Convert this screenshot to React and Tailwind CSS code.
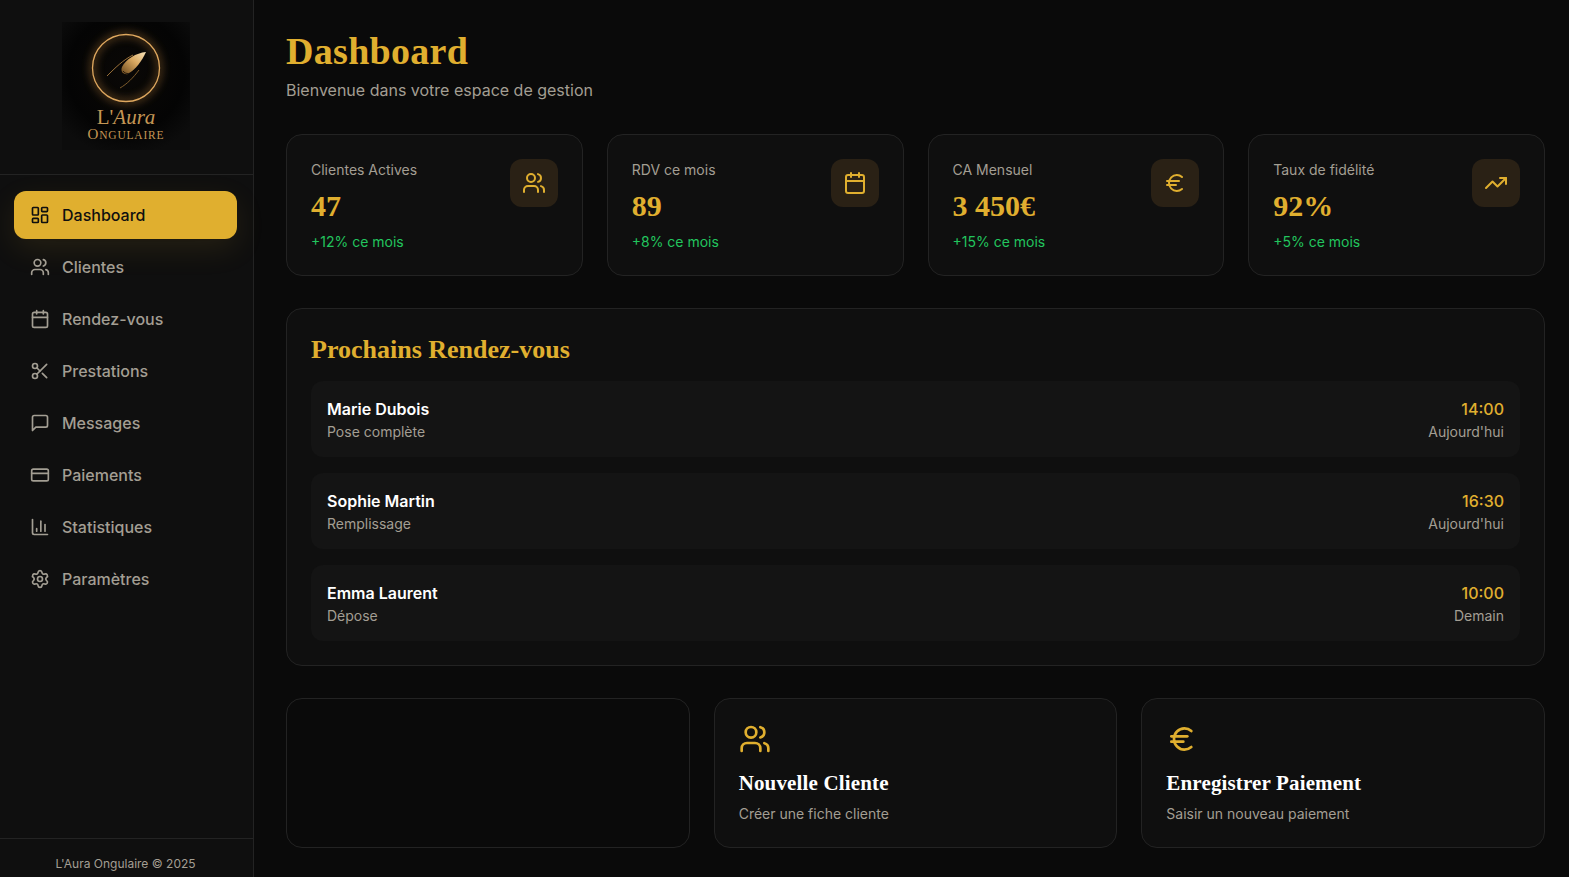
import {
    LayoutDashboard,
    Users,
    Calendar,
    Scissors,
    CreditCard,
    BarChart3,
    Settings,
    Euro,
    TrendingUp,
} from "lucide-react";

const serif = "font-['Liberation_Serif',serif] font-bold";

// lucide's current bubble is wider than the one in the picture
function MessageIcon({ size }) {
    return (
        <svg width={size} height={size} viewBox="0 0 24 24" fill="none" stroke="currentColor" strokeWidth="2" strokeLinecap="round" strokeLinejoin="round">
            <path d="M21 15a2 2 0 0 1-2 2H7l-4 4V5a2 2 0 0 1 2-2h14a2 2 0 0 1 2 2z" />
        </svg>
    );
}

const navItems = [
    { label: "Dashboard", icon: LayoutDashboard, active: true },
    { label: "Clientes", icon: Users },
    { label: "Rendez-vous", icon: Calendar },
    { label: "Prestations", icon: Scissors },
    { label: "Messages", icon: MessageIcon },
    { label: "Paiements", icon: CreditCard },
    { label: "Statistiques", icon: BarChart3 },
    { label: "Paramètres", icon: Settings },
];

const stats = [
    { label: "Clientes Actives", value: "47", delta: "+12% ce mois", icon: Users },
    { label: "RDV ce mois", value: "89", delta: "+8% ce mois", icon: Calendar },
    { label: "CA Mensuel", value: "3 450€", delta: "+15% ce mois", icon: Euro },
    { label: "Taux de fidélité", value: "92%", delta: "+5% ce mois", icon: TrendingUp },
];

const appointments = [
    { name: "Marie Dubois", service: "Pose complète", time: "14:00", day: "Aujourd'hui" },
    { name: "Sophie Martin", service: "Remplissage", time: "16:30", day: "Aujourd'hui" },
    { name: "Emma Laurent", service: "Dépose", time: "10:00", day: "Demain" },
];

function Logo() {
    return (
        <svg width="128" height="128" viewBox="0 0 128 128" className="block">
            <defs>
                <radialGradient id="bg" cx="50%" cy="40%" r="65%">
                    <stop offset="0%" stopColor="#0a0806" />
                    <stop offset="70%" stopColor="#040404" />
                    <stop offset="100%" stopColor="#0c0c0c" />
                </radialGradient>
                <linearGradient id="nail" x1="0" y1="1" x2="1" y2="0">
                    <stop offset="0%" stopColor="#6b481c" />
                    <stop offset="55%" stopColor="#d9a860" />
                    <stop offset="100%" stopColor="#f8e2b8" />
                </linearGradient>
                <filter id="glow" x="-30%" y="-30%" width="160%" height="160%">
                    <feGaussianBlur stdDeviation="4" />
                </filter>
            </defs>
            <rect width="128" height="128" fill="url(#bg)" />
            <circle cx="64" cy="46" r="33.5" fill="none" stroke="#c98a3c" strokeWidth="4" opacity="0.55" filter="url(#glow)" />
            <circle cx="64" cy="46" r="33.5" fill="none" stroke="#dfa85f" strokeWidth="1.3" />
            <path d="M84 30 C74 31 64 37 60 45 C58 50 62 53 66 52 C74 47 80 39 84 30 Z" fill="url(#nail)" />
            <path d="M61 49 C64 53 69 52 72 48" fill="none" stroke="#0a0806" strokeWidth="0.8" />
            <path d="M71 33 C61 38 53 46 45 54" fill="none" stroke="#a97c3e" strokeWidth="0.9" />
            <path d="M77 48 C71 56 65 62 58 66" fill="none" stroke="#8a6430" strokeWidth="0.9" />
            <text x="64" y="102" textAnchor="middle" fill="#c49654" fontSize="21" fontFamily="'Liberation Serif', serif">
                L'<tspan fontStyle="italic">Aura</tspan>
            </text>
            <text x="64" y="117" textAnchor="middle" fill="#c49654" fontSize="11.5" letterSpacing="0.8" fontFamily="'Liberation Serif', serif">
                <tspan fontSize="15">O</tspan>NGULAIRE
            </text>
        </svg>
    );
}

function Sidebar() {
    return (
        <aside className="flex h-[877px] w-[254px] shrink-0 flex-col border-r border-[#232323] bg-[#0f0f0f]">
            <div className="flex h-[175px] justify-center border-b border-[#232323] pt-[22px] pr-px">
                <Logo />
            </div>
            <nav className="flex flex-1 flex-col gap-1 pl-[14px] pr-4 pt-4">
                {navItems.map((item) => {
                    const Icon = item.icon;
                    return (
                        <div
                            key={item.label}
                            className={
                                item.active
                                    ? "flex h-12 items-center gap-3 rounded-xl bg-[#e0af2f] px-4 font-medium text-[#0f0f0f] shadow-[0_10px_30px_rgba(224,175,47,0.1)]"
                                    : "flex h-12 items-center gap-3 rounded-xl px-4 font-medium text-[#a39e93]"
                            }
                        >
                            <Icon size={20} />
                            <span>{item.label}</span>
                        </div>
                    );
                })}
            </nav>
            <div className="flex h-[39px] items-end justify-center border-t border-[#232323] pb-[5px] pr-[2px] text-xs text-[#a39e93]">
                L'Aura Ongulaire © 2025
            </div>
        </aside>
    );
}

function StatCard({ stat }) {
    const Icon = stat.icon;
    return (
        <div className="flex h-[142px] items-start justify-between rounded-2xl border border-[#232323] bg-[#0f0f0f] p-6">
            <div>
                <div className="text-sm leading-[22px] text-[#a39e93]">{stat.label}</div>
                <div className={`${serif} mt-[7px] text-[30px] leading-9 text-[#e0af2f]`}>{stat.value}</div>
                <div className="mt-2 text-sm leading-5 text-[#22c55e]">{stat.delta}</div>
            </div>
            <div className="flex h-12 w-12 items-center justify-center rounded-xl bg-[#2a2115] text-[#e0af2f]">
                <Icon size={24} />
            </div>
        </div>
    );
}

function ActionCard({ icon: Icon, title, text }) {
    return (
        <div className="h-[150px] rounded-2xl border border-[#232323] bg-[#0f0f0f] p-6">
            <Icon size={32} className="text-[#e0af2f]" />
            <div className={`${serif} mt-[14px] text-[21px] leading-7 tracking-[0.15px] text-white`}>{title}</div>
            <div className="mt-[7px] text-sm leading-5 text-[#a39e93]">{text}</div>
        </div>
    );
}

export default function App() {
    return (
        <div className="flex h-[877px] overflow-hidden bg-[#0a0a0a] font-['Inter',sans-serif]">
            <Sidebar />
            <main className="min-w-0 flex-1 pl-8 pr-6 pt-[29px]">
                <h1 className={`${serif} text-[38px] leading-[44px] tracking-[0.3px] text-[#e0af2f]`}>Dashboard</h1>
                <p className="mt-[5px] leading-6 text-[#a39e93]">Bienvenue dans votre espace de gestion</p>

                <div className="mt-8 grid grid-cols-4 gap-6">
                    {stats.map((stat) => (
                        <StatCard key={stat.label} stat={stat} />
                    ))}
                </div>

                <section className="mt-8 h-[358px] rounded-2xl border border-[#232323] bg-[#0f0f0f] p-6">
                    <h2 className={`${serif} text-[26px] leading-[34px] text-[#e0af2f]`}>Prochains Rendez-vous</h2>
                    <div className="mt-[14px] flex flex-col gap-4">
                        {appointments.map((a) => (
                            <div key={a.name} className="flex h-[76px] items-start justify-between rounded-xl bg-[#141414] px-4 pt-4">
                                <div>
                                    <div className="font-semibold leading-6 text-white">{a.name}</div>
                                    <div className="mt-px text-sm leading-5 text-[#a39e93]">{a.service}</div>
                                </div>
                                <div className="text-right">
                                    <div className="font-medium leading-6 text-[#e0af2f]">{a.time}</div>
                                    <div className="mt-px text-sm leading-5 text-[#a39e93]">{a.day}</div>
                                </div>
                            </div>
                        ))}
                    </div>
                </section>

                <div className="mt-8 grid grid-cols-3 gap-6">
                    <div className="h-[150px] rounded-2xl border border-[#232323] bg-[#0a0a0a]" />
                    <ActionCard icon={Users} title="Nouvelle Cliente" text="Créer une fiche cliente" />
                    <ActionCard icon={Euro} title="Enregistrer Paiement" text="Saisir un nouveau paiement" />
                </div>
            </main>
        </div>
    );
}
